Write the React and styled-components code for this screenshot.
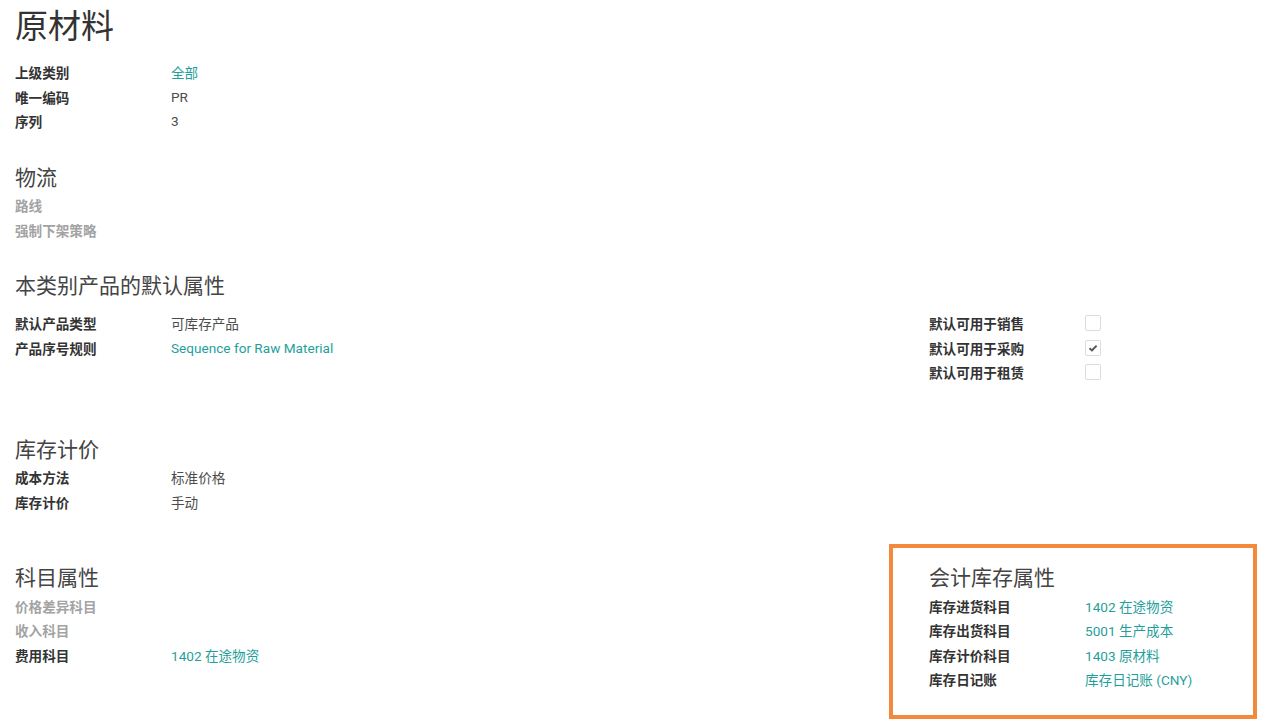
import React from "react";
import styled, { createGlobalStyle } from "styled-components";

const GlobalStyle = createGlobalStyle`
  html, body {
    margin: 0;
    padding: 0;
    background: #fff;
  }
  body {
    font-family: Roboto, "Noto Sans CJK SC", "Noto Sans", sans-serif;
    color: #4c4c4c;
  }
`;

const Sheet = styled.main`
  box-sizing: border-box;
  min-height: 724px;
  padding: 7px 0 40px 15px;
  width: 1265px;
`;

const Title = styled.h1`
  margin: 0 0 13px;
  font-size: 33px;
  line-height: 40px;
  font-weight: 400;
  color: #333;
`;

const Section = styled.section`
  display: grid;
  grid-template-columns: 914px 1fr;
  margin-top: ${(p) => p.$gap || 0}px;
`;

const Column = styled.div`
  position: relative;
  display: flex;
  flex-direction: column;
`;

const Heading = styled.h2`
  margin: 0 0 ${(p) => p.$after ?? 1}px;
  font-size: 21px;
  line-height: 30px;
  font-weight: 400;
  color: #444;
`;

const Row = styled.div`
  display: grid;
  grid-template-columns: 156px 1fr;
  align-items: center;
  height: 24.4px;
  font-size: 13.6px;
`;

const Label = styled.span`
  font-weight: 700;
  color: ${(p) => (p.$muted ? "#a3a3a3" : "#333")};
`;

const Value = styled.span`
  color: ${(p) => (p.$link ? "#1f9f9b" : "#4c4c4c")};
`;

const Box = styled.span`
  display: inline-flex;
  align-items: center;
  justify-content: center;
  width: 14px;
  height: 14px;
  border: 1px solid #dcdcdc;
  border-radius: 2px;
  background: #fff;
`;

const Highlight = styled.div`
  position: absolute;
  top: -19px;
  left: -40px;
  width: 368px;
  bottom: -28px;
  border: 4px solid #f5893b;
  box-sizing: border-box;
  pointer-events: none;
`;

const Check = ({ checked }) => (
  <Box>
    {checked && (
      <svg width="10" height="10" viewBox="0 0 10 10">
        <path d="M1.5 5.2 L4 7.5 L8.6 2.6" fill="none" stroke="#555" strokeWidth="1.9" />
      </svg>
    )}
  </Box>
);

const Field = ({ label, value, link, muted }) => (
  <Row>
    <Label $muted={muted}>{label}</Label>
    <Value $link={link}>{value}</Value>
  </Row>
);

const App = () => (
  <Sheet>
    <GlobalStyle />
    <Title>原材料</Title>

    <Section>
      <Column>
        <Field label="上级类别" value="全部" link />
        <Field label="唯一编码" value="PR" />
        <Field label="序列" value="3" />
      </Column>
    </Section>

    <Section $gap={30}>
      <Column>
        <Heading $after={0}>物流</Heading>
        <Field label="路线" muted />
        <Field label="强制下架策略" muted />
      </Column>
    </Section>

    <Section $gap={29}>
      <Column>
        <Heading $after={0}>本类别产品的默认属性</Heading>
      </Column>
    </Section>
    <Section $gap={10}>
      <Column>
        <Field label="默认产品类型" value="可库存产品" />
        <Field label="产品序号规则" value="Sequence for Raw Material" link />
      </Column>
      <Column>
        <Row>
          <Label>默认可用于销售</Label>
          <Check />
        </Row>
        <Row>
          <Label>默认可用于采购</Label>
          <Check checked />
        </Row>
        <Row>
          <Label>默认可用于租赁</Label>
          <Check />
        </Row>
      </Column>
    </Section>

    <Section $gap={51}>
      <Column>
        <Heading $after={0}>库存计价</Heading>
        <Field label="成本方法" value="标准价格" />
        <Field label="库存计价" value="手动" />
      </Column>
    </Section>

    <Section $gap={49}>
      <Column>
        <Heading>科目属性</Heading>
        <Field label="价格差异科目" muted />
        <Field label="收入科目" muted />
        <Field label="费用科目" value="1402 在途物资" link />
      </Column>
      <Column>
        <Highlight />
        <Heading>会计库存属性</Heading>
        <Field label="库存进货科目" value="1402 在途物资" link />
        <Field label="库存出货科目" value="5001 生产成本" link />
        <Field label="库存计价科目" value="1403 原材料" link />
        <Field label="库存日记账" value="库存日记账 (CNY)" link />
      </Column>
    </Section>
  </Sheet>
);

export default App;
